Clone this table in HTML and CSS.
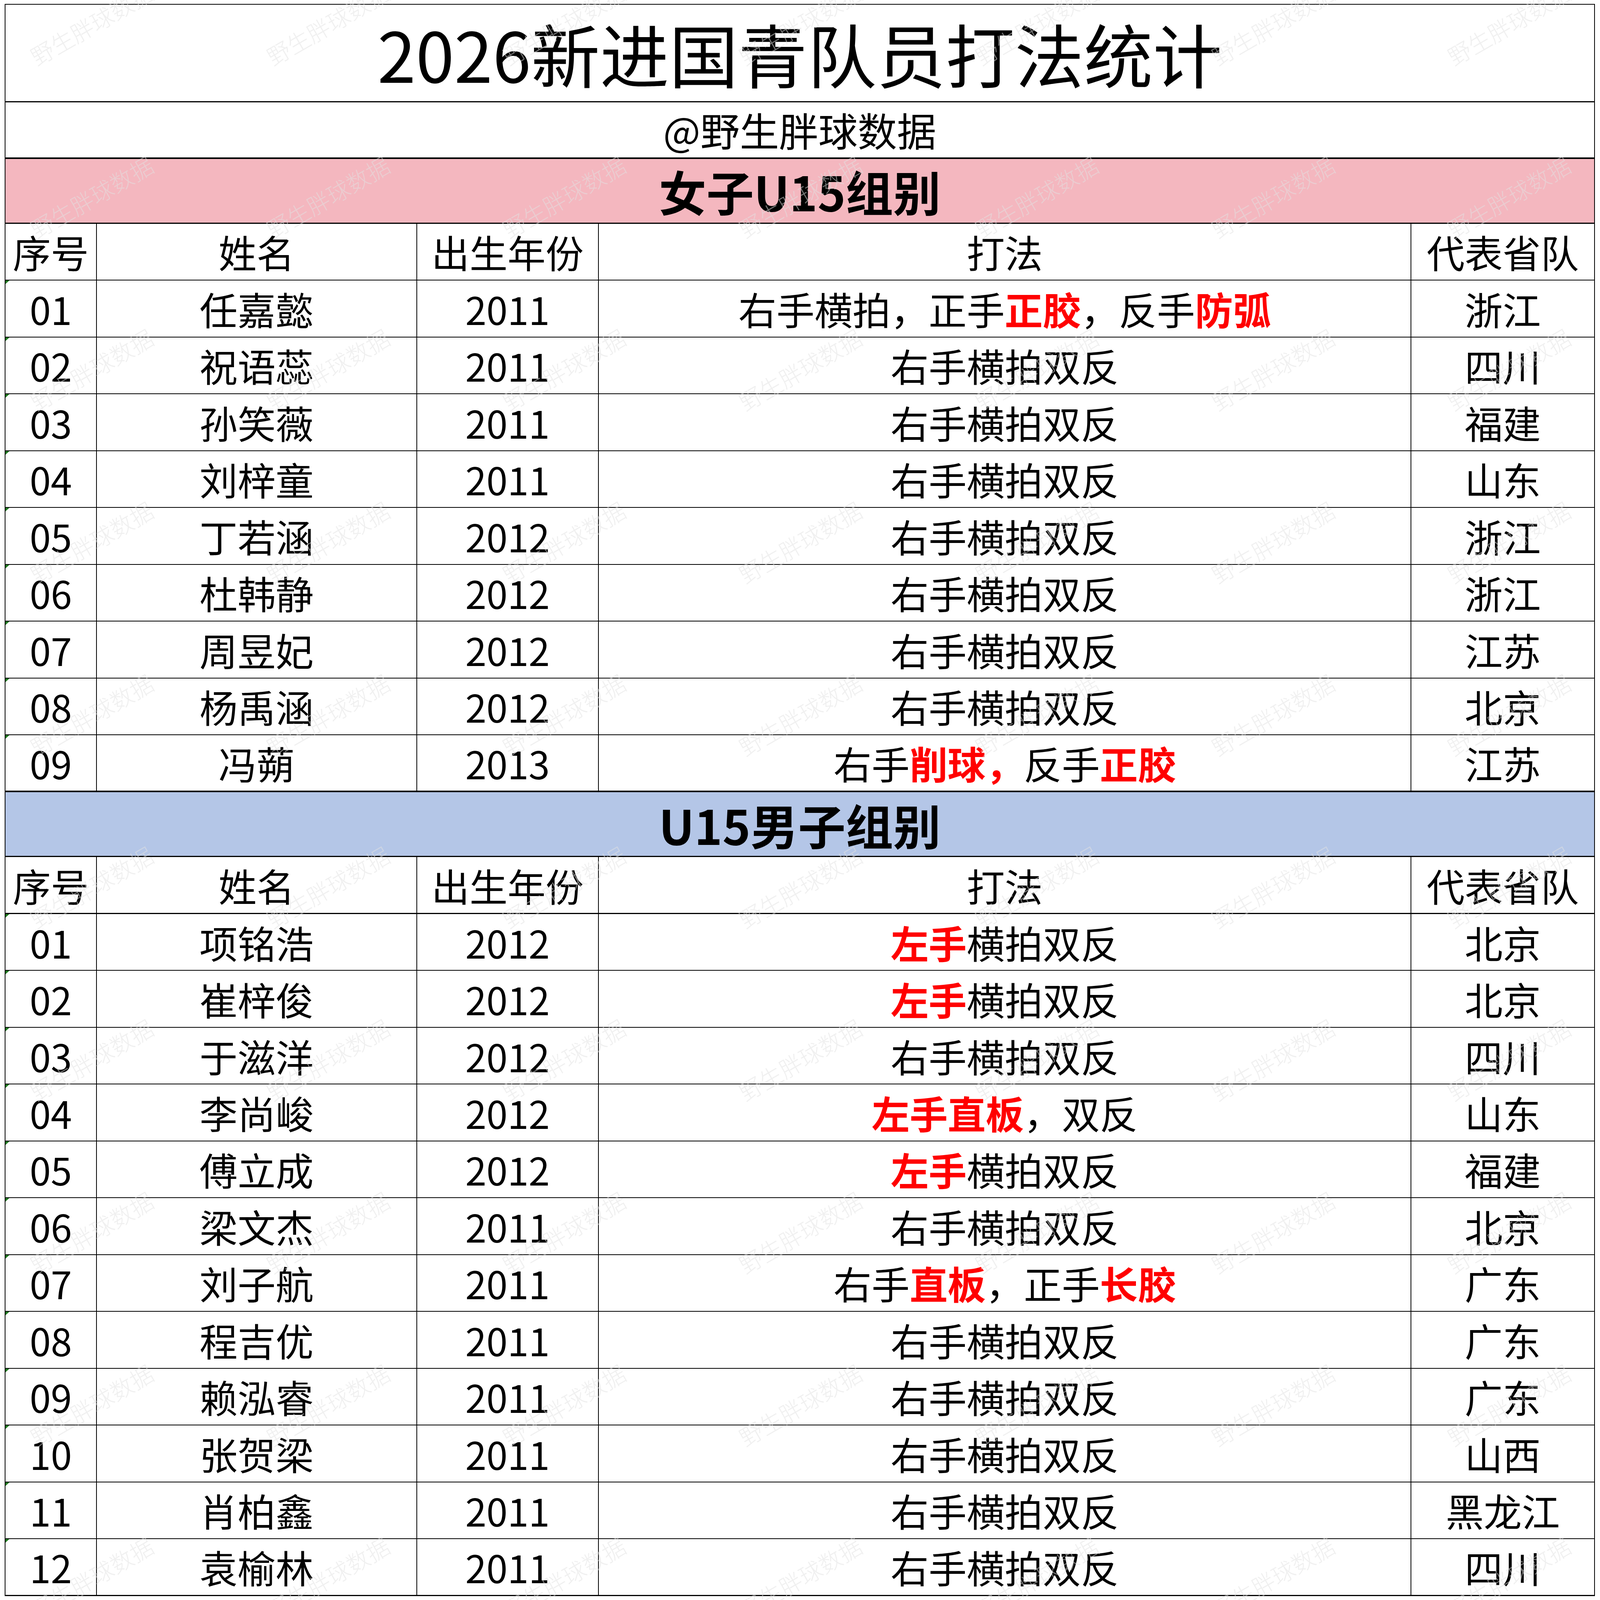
FILE: index.html
```html
<!DOCTYPE html>
<html lang="zh-CN">
<head>
<meta charset="utf-8">
<title>2026新进国青队员打法统计</title>
<link rel="stylesheet" href="styles.css">
</head>
<body>
<div class="page">
  <table class="sheet">
    <colgroup>
      <col class="c-idx"><col class="c-name"><col class="c-year"><col class="c-style"><col class="c-prov">
    </colgroup>
    <tbody>
      <tr class="r-title"><td colspan="5" class="title">2026新进国青队员打法统计</td></tr>
      <tr class="r-sub"><td colspan="5" class="sub">@野生胖球数据</td></tr>
      <tr class="r-sec"><td colspan="5" class="sec pink">女子U15组别</td></tr>
      <tr class="r-head"><td>序号</td><td>姓名</td><td>出生年份</td><td>打法</td><td>代表省队</td></tr>
      <tr class="r"><td class="idx">01</td><td>任嘉懿</td><td>2011</td><td>右手横拍，正手<b>正胶</b>，反手<b>防弧</b></td><td>浙江</td></tr>
      <tr class="r"><td class="idx">02</td><td>祝语蕊</td><td>2011</td><td>右手横拍双反</td><td>四川</td></tr>
      <tr class="r"><td class="idx">03</td><td>孙笑薇</td><td>2011</td><td>右手横拍双反</td><td>福建</td></tr>
      <tr class="r"><td class="idx">04</td><td>刘梓童</td><td>2011</td><td>右手横拍双反</td><td>山东</td></tr>
      <tr class="r"><td class="idx">05</td><td>丁若涵</td><td>2012</td><td>右手横拍双反</td><td>浙江</td></tr>
      <tr class="r"><td class="idx">06</td><td>杜韩静</td><td>2012</td><td>右手横拍双反</td><td>浙江</td></tr>
      <tr class="r"><td class="idx">07</td><td>周昱妃</td><td>2012</td><td>右手横拍双反</td><td>江苏</td></tr>
      <tr class="r"><td class="idx">08</td><td>杨禹涵</td><td>2012</td><td>右手横拍双反</td><td>北京</td></tr>
      <tr class="r sec-end"><td class="idx">09</td><td>冯蒴</td><td>2013</td><td>右手<b>削球，</b>反手<b>正胶</b></td><td>江苏</td></tr>
      <tr class="r-sec"><td colspan="5" class="sec blue">U15男子组别</td></tr>
      <tr class="r-head thick-bottom"><td>序号</td><td>姓名</td><td>出生年份</td><td>打法</td><td>代表省队</td></tr>
      <tr class="r"><td class="idx">01</td><td>项铭浩</td><td>2012</td><td><b>左手</b>横拍双反</td><td>北京</td></tr>
      <tr class="r"><td class="idx">02</td><td>崔梓俊</td><td>2012</td><td><b>左手</b>横拍双反</td><td>北京</td></tr>
      <tr class="r"><td class="idx">03</td><td>于滋洋</td><td>2012</td><td>右手横拍双反</td><td>四川</td></tr>
      <tr class="r"><td class="idx">04</td><td>李尚峻</td><td>2012</td><td><b>左手直板</b>，双反</td><td>山东</td></tr>
      <tr class="r"><td class="idx">05</td><td>傅立成</td><td>2012</td><td><b>左手</b>横拍双反</td><td>福建</td></tr>
      <tr class="r"><td class="idx">06</td><td>梁文杰</td><td>2011</td><td>右手横拍双反</td><td>北京</td></tr>
      <tr class="r"><td class="idx">07</td><td>刘子航</td><td>2011</td><td>右手<b>直板</b>，正手<b>长胶</b></td><td>广东</td></tr>
      <tr class="r"><td class="idx">08</td><td>程吉优</td><td>2011</td><td>右手横拍双反</td><td>广东</td></tr>
      <tr class="r"><td class="idx">09</td><td>赖泓睿</td><td>2011</td><td>右手横拍双反</td><td>广东</td></tr>
      <tr class="r"><td class="idx">10</td><td>张贺梁</td><td>2011</td><td>右手横拍双反</td><td>山西</td></tr>
      <tr class="r"><td class="idx">11</td><td>肖柏鑫</td><td>2011</td><td>右手横拍双反</td><td>黑龙江</td></tr>
      <tr class="r last"><td class="idx">12</td><td>袁榆林</td><td>2011</td><td>右手横拍双反</td><td>四川</td></tr>
    </tbody>
  </table>

  <div class="wm" aria-hidden="true">
    <span>野生胖球数据</span><span>野生胖球数据</span><span>野生胖球数据</span><span>野生胖球数据</span><span>野生胖球数据</span><span>野生胖球数据</span><span>野生胖球数据</span>
    <span>野生胖球数据</span><span>野生胖球数据</span><span>野生胖球数据</span><span>野生胖球数据</span><span>野生胖球数据</span><span>野生胖球数据</span><span>野生胖球数据</span>
    <span>野生胖球数据</span><span>野生胖球数据</span><span>野生胖球数据</span><span>野生胖球数据</span><span>野生胖球数据</span><span>野生胖球数据</span><span>野生胖球数据</span>
    <span>野生胖球数据</span><span>野生胖球数据</span><span>野生胖球数据</span><span>野生胖球数据</span><span>野生胖球数据</span><span>野生胖球数据</span><span>野生胖球数据</span>
    <span>野生胖球数据</span><span>野生胖球数据</span><span>野生胖球数据</span><span>野生胖球数据</span><span>野生胖球数据</span><span>野生胖球数据</span><span>野生胖球数据</span>
    <span>野生胖球数据</span><span>野生胖球数据</span><span>野生胖球数据</span><span>野生胖球数据</span><span>野生胖球数据</span><span>野生胖球数据</span><span>野生胖球数据</span>
    <span>野生胖球数据</span><span>野生胖球数据</span><span>野生胖球数据</span><span>野生胖球数据</span><span>野生胖球数据</span><span>野生胖球数据</span><span>野生胖球数据</span>
    <span>野生胖球数据</span><span>野生胖球数据</span><span>野生胖球数据</span><span>野生胖球数据</span><span>野生胖球数据</span><span>野生胖球数据</span><span>野生胖球数据</span>
    <span>野生胖球数据</span><span>野生胖球数据</span><span>野生胖球数据</span><span>野生胖球数据</span><span>野生胖球数据</span><span>野生胖球数据</span><span>野生胖球数据</span>
    <span>野生胖球数据</span><span>野生胖球数据</span><span>野生胖球数据</span><span>野生胖球数据</span><span>野生胖球数据</span><span>野生胖球数据</span><span>野生胖球数据</span>
  </div>
</div>
</body>
</html>
```
FILE: styles.css
```css
/* Horizontal unit: 1rem = 100 reference pixels of width (100vw = 5046).
   Vertical unit: vh, where 100vh = 5913 reference pixels of height. */
html {
  font-size: calc(100vw / 50.46);
  overflow: hidden;
  background: #ffffff;
}

body {
  margin: 0;
  padding: 0;
  background: #ffffff;
}

.page {
  position: relative;
  width: 100vw;
  height: 100vh;
  overflow: hidden;
  box-sizing: border-box;
  padding: 0.2537vh 0 0 0.15rem;
  font-family: "Noto Sans CJK SC", "Noto Sans", sans-serif;
  color: #000;
}

.sheet {
  border-collapse: collapse;
  table-layout: fixed;
  width: 50.14rem;
  border-style: solid;
  border-color: #000;
  border-width: 0.0507vh 0.03rem 0.0846vh 0.03rem;
}

.c-idx { width: 2.88rem; }
.c-name { width: 10.10rem; }
.c-year { width: 5.73rem; }
.c-style { width: 25.63rem; }
.c-prov { width: 5.78rem; }

.sheet td {
  border-style: solid;
  border-color: #000;
  border-width: 0.0507vh 0.03rem;
  padding: 0;
  text-align: center;
  vertical-align: middle;
  white-space: nowrap;
  font-size: 1.2rem;
  line-height: 1.15;
  font-weight: 400;
}

.sheet b {
  color: #ff0000;
  font-weight: 700;
}

.r-title { height: 6.0713vh; }
.r-sub { height: 3.5346vh; }
.r-sec { height: 4.0589vh; }
.r-head { height: 3.5684vh; }
.r { height: 3.5515vh; }

.sheet td.title {
  font-size: 2.18rem;
  border-bottom-width: 0.0846vh;
}

.sheet td.sub {
  font-size: 1.24rem;
  border-bottom-width: 0.0846vh;
}

.sheet td.sec {
  font-size: 1.5rem;
  font-weight: 700;
  border-top-width: 0.1015vh;
  border-bottom-width: 0.0846vh;
}

.pink { background: #f4b7bf; }
.blue { background: #b4c6e7; }

.thick-bottom td { border-bottom-width: 0.0846vh; }
.sec-end td { border-bottom-width: 0.1015vh; }
.last td { border-bottom-width: 0.0846vh; }

.idx { position: relative; }
.idx::before {
  content: "";
  position: absolute;
  top: 0;
  left: 0;
  border-top: 0.22vh solid #1f7a1f;
  border-right: 0.13rem solid transparent;
}

.wm {
  position: absolute;
  left: -0.84rem;
  top: -3.9066vh;
  display: grid;
  grid-template-columns: repeat(7, 7.45rem);
  grid-auto-rows: 10.7898vh;
  place-items: center;
  pointer-events: none;
}

.wm span {
  display: block;
  font-family: "Noto Sans CJK SC", sans-serif;
  font-size: 0.72rem;
  font-weight: 300;
  line-height: 1;
  white-space: nowrap;
  color: rgba(225, 225, 225, 0.5);
  transform: rotate(-30deg);
}
```
